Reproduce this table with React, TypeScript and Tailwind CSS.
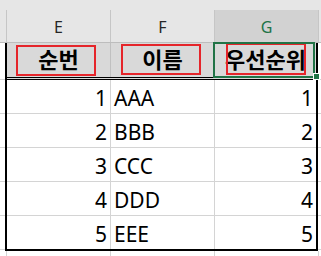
import React from "react";

const rows = [
  { no: 1, name: "AAA", rank: 1 },
  { no: 2, name: "BBB", rank: 2 },
  { no: 3, name: "CCC", rank: 3 },
  { no: 4, name: "DDD", rank: 4 },
  { no: 5, name: "EEE", rank: 5 },
];

export default function App() {
  return (
    <div className="relative w-[321px] h-[256px] overflow-hidden bg-white text-black font-['Noto_Sans','Noto_Sans_CJK_KR',sans-serif]">
      {/* column header band */}
      <div className="h-[10px] bg-[#e6e6e6]" />
      <div className="flex h-[33px] bg-[#e6e6e6] border-b border-[#bdbdbd] text-[16px] text-[#262626]">
        <div className="w-[6px]" />
        <div className="w-[104px] border-l border-[#c6c6c6] flex items-center justify-center pt-[2px]">E</div>
        <div className="w-[104px] border-l border-[#c6c6c6] flex items-center justify-center pt-[2px]">F</div>
        <div className="w-[104px] border-l border-[#c6c6c6] bg-[#d2d2d2] flex items-center justify-center pt-[2px] text-[#217346]">G</div>
        <div className="flex-1 border-l border-[#c6c6c6]" />
      </div>

      {/* sheet body */}
      <div className="flex">
        <div className="w-[5px] flex flex-col">
          <div className="h-[37px] border-b border-[#d4d4d4]" />
          <div className="h-[34px] border-b border-[#d4d4d4]" />
          <div className="h-[34px] border-b border-[#d4d4d4]" />
          <div className="h-[34px] border-b border-[#d4d4d4]" />
          <div className="h-[34px] border-b border-[#d4d4d4]" />
          <div className="h-[34px] border-b border-[#d4d4d4]" />
        </div>

        <div className="w-[313px] border-l-2 border-r-2 border-b-2 border-black">
          <div className="flex h-[37px] bg-[#d9d9d9] border-b-[3px] border-double border-black font-bold text-[22px] leading-[24px]">
            <div className="w-[104px] border-r border-[#c0c0c0] flex items-center justify-center pb-[2px]">순번</div>
            <div className="w-[104px] border-r border-[#c0c0c0] flex items-center justify-center pb-[2px]">이름</div>
            <div className="flex-1 flex items-center justify-center pb-[2px]">우선순위</div>
          </div>
          {rows.map((r, i) => (
            <div
              key={r.no}
              className={`flex text-[21px] leading-[24px] ${i < rows.length - 1 ? "h-[34px] border-b border-[#d4d4d4]" : "h-[33px]"}`}
            >
              <div className="w-[104px] border-r border-[#d4d4d4] flex items-center justify-end pr-[3px] pt-[2px]">{r.no}</div>
              <div className="w-[104px] border-r border-[#d4d4d4] flex items-center pl-[3px] pt-[2px]">{r.name}</div>
              <div className="flex-1 flex items-center justify-end pr-[3px] pt-[2px]">{r.rank}</div>
            </div>
          ))}
        </div>

        <div className="flex-1 flex flex-col">
          <div className="h-[37px] border-b border-[#d4d4d4]" />
          <div className="h-[34px] border-b border-[#d4d4d4]" />
          <div className="h-[34px] border-b border-[#d4d4d4]" />
          <div className="h-[34px] border-b border-[#d4d4d4]" />
          <div className="h-[34px] border-b border-[#d4d4d4]" />
          <div className="h-[34px] border-b border-[#d4d4d4]" />
        </div>
      </div>

      {/* grid continuing below the bordered range */}
      <div className="flex h-[5px]">
        <div className="w-[6px]" />
        <div className="w-[104px] border-l border-[#d4d4d4]" />
        <div className="w-[104px] border-l border-[#d4d4d4]" />
        <div className="w-[104px] border-l border-[#d4d4d4]" />
        <div className="flex-1 border-l border-[#d4d4d4]" />
      </div>

      {/* red outline shapes over the header cells */}
      <div className="absolute left-[16px] top-[45px] w-[80px] h-[31px] border-2 border-[#e5252a]" />
      <div className="absolute left-[121px] top-[44px] w-[80px] h-[31px] border-2 border-[#e5252a]" />
      <div className="absolute left-[226px] top-[43px] w-[80px] h-[32px] border-2 border-[#e5252a]" />

      {/* active cell selection */}
      <div className="absolute left-[213px] top-[42px] w-[102px] h-[36px] border-2 border-[#217346]" />
      <div className="absolute left-[313px] top-[73px] w-[7px] h-[7px] bg-[#217346] border border-white" />
    </div>
  );
}
